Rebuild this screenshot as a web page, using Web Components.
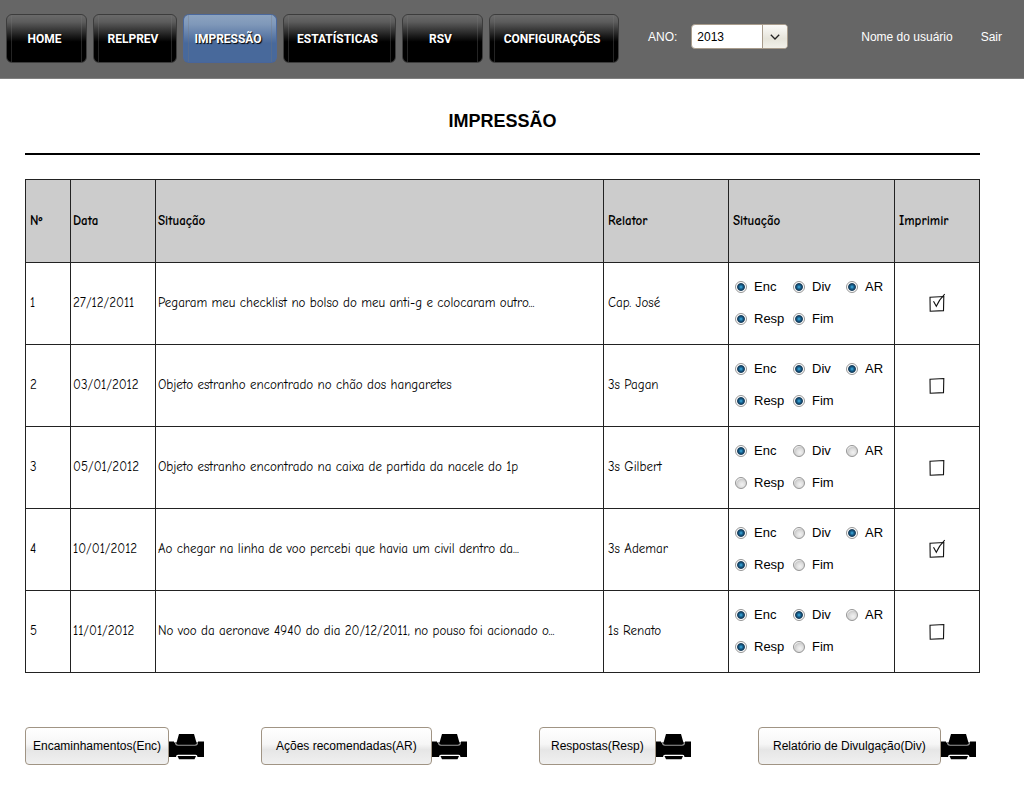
<!DOCTYPE html>
<html lang="pt-BR">
<head>
<meta charset="utf-8">
<meta name="viewport" content="width=device-width, initial-scale=1">
<title>Impressão</title>
<style>
  body { margin: 0; background: #fff; color: #000; font-family: "Liberation Sans", Arial, sans-serif; font-size: 12px; }
</style>
</head>
<body>
<print-page></print-page>

<template id="nav-item-t">
  <style>
    :host { display: block; }
    a {
      display: flex; align-items: center; justify-content: center;
      height: 49px; box-sizing: border-box; padding-right: 4px;
      position: relative;
      border: 1px solid #3c3c3c; border-radius: 6px;
      background: linear-gradient(#6a6a6a 0, #5c5c5c 15%, #000 57%, #000 100%);
      color: #fff; font: bold 12px/16px Roboto, sans-serif; text-decoration: none;
      text-shadow: 1px 1px 1px #000;
    }
    a::after {
      content: ""; position: absolute; inset: 0 4px;
      border: solid rgba(120,120,120,.3); border-width: 0 1px;
    }
    :host([current]) a {
      border-color: #4b689b #4b689b #48659a;
      background: linear-gradient(#8ca3c0 0, #7f98b9 20%, #48699b 60%, #48699b 100%);
    }
  </style>
  <a href="#"><slot></slot></a>
</template>

<template id="year-picker-t">
  <style>
    :host { display: flex; align-items: center; gap: 14px; }
    label { color: #fff; }
    .box {
      display: grid; grid-template-columns: 1fr 25px; box-sizing: border-box;
      width: 97px; height: 25px; border: 1px solid #a89c8c; border-radius: 4px;
      background: #fff; overflow: hidden;
    }
    select {
      grid-area: 1 / 1 / 2 / 3; appearance: none; border: 0; margin: 0; padding: 0 0 0 5px;
      background: none; color: #000; font: 12px/16px "Liberation Sans", Arial, sans-serif;
    }
    .arrow {
      grid-area: 1 / 2; border-left: 1px solid #a89c8c; pointer-events: none;
      background: linear-gradient(#fbfaf8, #e6e4da 60%, #f2f1ea);
      display: flex; align-items: center; justify-content: center;
    }
    svg { display: block; }
  </style>
  <label for="year"><slot></slot></label>
  <span class="box">
    <select id="year"><option>2013</option><option>2012</option><option>2011</option></select>
    <span class="arrow"><svg width="10" height="6" viewBox="0 0 10 6" fill="none" stroke="#222" stroke-width="1.3"><path d="M.8.8 5 5 9.2.8"/></svg></span>
  </span>
</template>

<template id="top-bar-t">
  <style>
    :host { display: flex; align-items: flex-start; background: #666; border-bottom: 1px solid #808080; padding: 14px 22px 15px 6px; }
    nav { display: grid; grid-template-columns: 81px 84px 94px 113px 81px 130px; gap: 6px; }
    year-picker { margin-left: 29px; height: 45px; }
    .session { margin-left: auto; height: 45px; display: flex; align-items: center; gap: 28px; }
    .session a { color: #fff; text-decoration: none; }
  </style>
  <nav>
    <nav-item>HOME</nav-item>
    <nav-item>RELPREV</nav-item>
    <nav-item current>IMPRESSÃO</nav-item>
    <nav-item>ESTATÍSTICAS</nav-item>
    <nav-item>RSV</nav-item>
    <nav-item>CONFIGURAÇÕES</nav-item>
  </nav>
  <year-picker>ANO:</year-picker>
  <div class="session"><a href="#">Nome do usuário</a><a href="#">Sair</a></div>
</template>

<template id="status-radio-t">
  <style>
    :host { display: block; }
    label { display: flex; align-items: center; gap: 7px; font: 13px/32px "Liberation Sans", Arial, sans-serif; }
    input {
      appearance: none; flex: none; box-sizing: border-box; width: 12px; height: 12px; margin: 0;
      border: 1px solid #969696; border-radius: 50%;
      background: radial-gradient(circle at 60% 65%, #f2f2f2 0, #e0e0e0 35%, #ccc 60%, #fff 75%);
    }
    input:checked { background: radial-gradient(circle, #45b4e4 0, #1d6f9f 22%, #0d3453 48%, #fff 62%); }
  </style>
  <label><input type="radio"><span><slot></slot></span></label>
</template>

<template id="sketch-check-t">
  <style>
    :host { display: inline-block; vertical-align: middle; }
    label { display: block; position: relative; width: 16px; height: 16px; }
    input { appearance: none; display: block; width: 16px; height: 16px; margin: 0; }
    svg { position: absolute; left: 0; top: -3px; pointer-events: none; }
    .tick { display: none; }
    input:checked + svg .tick { display: inline; }
  </style>
  <label><input type="checkbox" aria-label="Imprimir"><svg width="17" height="19" viewBox="0 0 17 19" fill="none" stroke="#111" stroke-width="1.1"><path d="M1 4.2 14.8 3.5 14.5 17.6 1.2 18.2Z"/><path class="tick" d="M4.5 8.2 7.3 13.2Q10 7 15.7 1.2"/></svg></label>
</template>

<template id="report-table-t">
  <style>
    :host { display: block; }
    table {
      width: 100%; table-layout: fixed; border-collapse: collapse;
      font: 13px/16px "Comic Neue", "Comic Sans MS", Lato, sans-serif;
    }
    .no { width: 45px; } .date { width: 85px; } .by { width: 125px; } .st { width: 166px; } .pr { width: 85px; }
    th, td { box-sizing: border-box; height: 82px; padding: 0 0 0 4px; border: 1px solid #222; text-align: left; vertical-align: middle; }
    th { height: 83px; background: #ccc; font-weight: 900; }
    th:nth-child(2), th:nth-child(3), td:nth-child(2), td:nth-child(3) { padding-left: 2px; }
    td:nth-child(5) { padding-left: 6px; }
    td:nth-child(6) { padding: 0; text-align: center; }
    td { padding-bottom: 2px; }
    .states { display: grid; grid-template-columns: 58px 53px 1fr; }
  </style>
  <table>
    <colgroup><col class="no"><col class="date"><col><col class="by"><col class="st"><col class="pr"></colgroup>
    <thead><tr><th>Nº</th><th>Data</th><th>Situação</th><th>Relator</th><th>Situação</th><th>Imprimir</th></tr></thead>
    <tbody></tbody>
  </table>
</template>

<template id="print-button-t">
  <style>
    :host { display: flex; align-items: center; }
    button {
      height: 38px; box-sizing: border-box; padding: 0 var(--side, 14px); white-space: nowrap;
      border: 1px solid #a09484; border-radius: 4px; color: #000;
      background: linear-gradient(#fff 0, #f6f6f6 45%, #e6e6e6 60%, #f0f0f0 100%);
      font: 12px/16px "Liberation Sans", Arial, sans-serif;
    }
    svg { display: block; flex: none; margin-top: 1px; }
  </style>
  <button type="button"><slot></slot></button>
  <svg width="35" height="26" viewBox="0 0 35 26" aria-hidden="true">
    <path d="M0 7.5H5V8.5H29V7.5H35V23H0Z" fill="#000"/>
    <path d="M10 0H25L28 10.5H7Z" fill="#000"/>
    <path d="M6.5 8.5Q6.5 11.2 9 11.2H26Q28.5 11.2 28.5 8.5" fill="none" stroke="#999" stroke-width="1.1"/>
    <path d="M7 26V23Q7 20.7 9 20.7H26.5Q28.5 20.7 28.5 23V26Z" fill="#fff"/>
    <path d="M8.5 22H27L25.5 25.2H10Z" fill="#000"/>
  </svg>
</template>

<template id="print-page-t">
  <style>
    :host { display: block; }
    main { padding: 32px 44px 24px 25px; }
    h1 { margin: 0; padding-bottom: 22px; border-bottom: 2px solid #000; text-align: center; font-size: 18px; line-height: 20px; }
    report-table { margin-top: 24px; }
    .actions { display: grid; grid-template-columns: 236fr 278fr 219fr 222fr; margin-top: 54px; }
    .narrow { --side: 7px; }
    .medium { --side: 11px; }
  </style>
  <top-bar></top-bar>
  <main>
    <h1>IMPRESSÃO</h1>
    <report-table></report-table>
    <div class="actions">
      <print-button class="narrow">Encaminhamentos(Enc)</print-button>
      <print-button>Ações recomendadas(AR)</print-button>
      <print-button class="medium">Respostas(Resp)</print-button>
      <print-button>Relatório de Divulgação(Div)</print-button>
    </div>
  </main>
</template>

<script>
  class Base extends HTMLElement {
    constructor() {
      super();
      const t = document.getElementById(this.localName + '-t');
      this.attachShadow({ mode: 'open' }).append(t.content.cloneNode(true));
    }
  }
  class Checkable extends Base {
    connectedCallback() {
      this.shadowRoot.querySelector('input').checked = this.hasAttribute('checked');
    }
  }
  const STATES = ['Enc', 'Div', 'AR', 'Resp', 'Fim'];
  const REPORTS = [
    ['1', '27/12/2011', 'Pegaram meu checklist no bolso do meu anti-g e colocaram outro...', 'Cap. José', [1, 1, 1, 1, 1], 1],
    ['2', '03/01/2012', 'Objeto estranho encontrado no chão dos hangaretes', '3s Pagan', [1, 1, 1, 1, 1], 0],
    ['3', '05/01/2012', 'Objeto estranho encontrado na caixa de partida da nacele do 1p', '3s Gilbert', [1, 0, 0, 0, 0], 0],
    ['4', '10/01/2012', 'Ao chegar na linha de voo percebi que havia um civil dentro da...', '3s Ademar', [1, 0, 1, 1, 0], 1],
    ['5', '11/01/2012', 'No voo da aeronave 4940 do dia 20/12/2011, no pouso foi acionado o...', '1s Renato', [1, 1, 0, 1, 0], 0]
  ];
  class ReportTable extends Base {
    connectedCallback() {
      this.shadowRoot.querySelector('tbody').innerHTML = REPORTS.map(([no, date, text, by, on, print]) => `
        <tr><td>${no}</td><td>${date}</td><td>${text}</td><td>${by}</td>
        <td><div class="states">${STATES.map((s, i) => `<status-radio ${on[i] ? 'checked' : ''}>${s}</status-radio>`).join('')}</div></td>
        <td><sketch-check ${print ? 'checked' : ''}></sketch-check></td></tr>`).join('');
    }
  }
  customElements.define('nav-item', class extends Base {});
  customElements.define('year-picker', class extends Base {});
  customElements.define('top-bar', class extends Base {});
  customElements.define('status-radio', class extends Checkable {});
  customElements.define('sketch-check', class extends Checkable {});
  customElements.define('report-table', ReportTable);
  customElements.define('print-button', class extends Base {});
  customElements.define('print-page', class extends Base {});
</script>
</body>
</html>
